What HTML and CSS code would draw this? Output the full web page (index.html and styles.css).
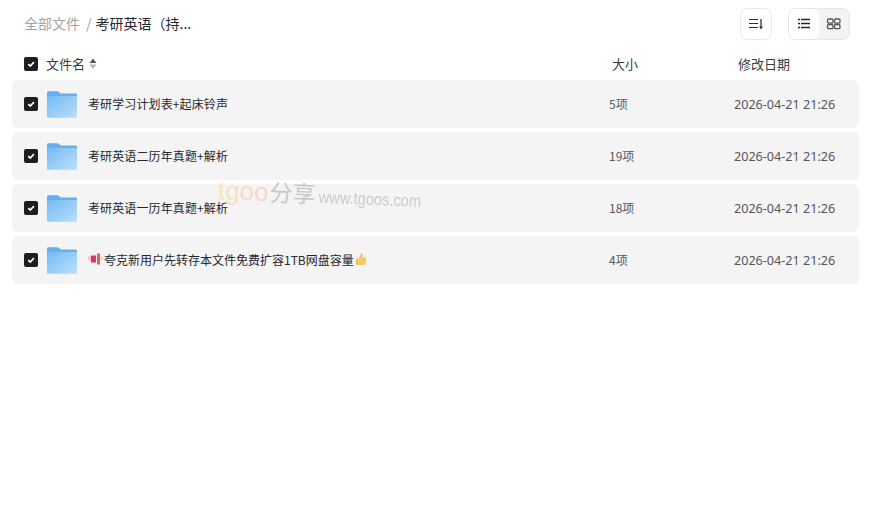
FILE: index.html
```html
<!DOCTYPE html>
<html lang="zh-CN">
<head>
<meta charset="utf-8">
<title>考研英语</title>
<link rel="stylesheet" href="styles.css">
</head>
<body>
<svg class="defs" width="0" height="0" aria-hidden="true">
  <defs>
    <linearGradient id="fg" x1="0" y1="0" x2="1" y2="1">
      <stop offset="0" stop-color="#74baf3"/>
      <stop offset="1" stop-color="#bbdffb"/>
    </linearGradient>
    <symbol id="folder" viewBox="0 0 30 28">
      <path d="M0 2.800C0 1.900.7 1.200 1.600 1.200h8.600c.6 0 1.100.3 1.500.6L13.500 3.500H28.500c.9 0 1.500.7 1.500 1.500V8H0z" fill="#63aeef"/>
      <path d="M0 6h28.500c.8 0 1.500.7 1.500 1.500v18.900c0 .7-.6 1.300-1.300 1.300H1.300C.6 27.700 0 27.100 0 26.400z" fill="url(#fg)"/>
      <rect x="22" y="8.500" width="3.500" height="1.500" fill="#93c8f3"/>
    </symbol>
    <symbol id="check" viewBox="0 0 14 14">
      <rect width="14" height="14" rx="2" fill="#1d1e24"/>
      <path d="M4.300 7.100l2 2 3.600-4" fill="none" stroke="#fff" stroke-width="1.700"/>
    </symbol>
  </defs>
</svg>
<main class="page">
  <header class="topbar">
    <nav class="crumbs">
      <span class="crumb-root">全部文件</span>
      <span class="crumb-sep">/</span>
      <span class="crumb-cur">考研英语（持...</span>
    </nav>
    <div class="tools">
      <button class="tool-btn" type="button" aria-label="排序">
        <svg width="16" height="16" viewBox="0 0 16 16"><path d="M1 3.500h9M1 7.500h9M1 11.500h9" stroke="#33343a" stroke-width="1.200" fill="none"/><path d="M13 3v9" stroke="#33343a" stroke-width="1.300"/><path d="M11 10.500h4L13 13.500z" fill="#33343a"/></svg>
      </button>
      <div class="view-switch">
        <span class="view-opt view-on">
          <svg width="16" height="16" viewBox="0 0 16 16"><path d="M5 3.500h9M5 7.500h9M5 11.500h9" stroke="#26272d" stroke-width="1.300" fill="none"/><path d="M2 3.500h2M2 7.500h2M2 11.500h2" stroke="#26272d" stroke-width="1.300" fill="none"/></svg>
        </span>
        <span class="view-opt">
          <svg width="16" height="16" viewBox="0 0 16 16"><g fill="none" stroke="#55565c" stroke-width="1.300"><rect x="1.500" y="3" width="5.500" height="4.200" rx="1.300"/><rect x="8.500" y="3" width="5.500" height="4.200" rx="1.300"/><rect x="1.500" y="8.500" width="5.500" height="4.200" rx="1.300"/><rect x="8.500" y="8.500" width="5.500" height="4.200" rx="1.300"/></g></svg>
        </span>
      </div>
    </div>
  </header>

  <div class="head-row">
    <svg class="check" width="14" height="14"><use href="#check"/></svg>
    <span class="head-name">文件名</span>
    <svg class="sort" width="8" height="12" viewBox="0 0 8 12"><path d="M4 .5L7.500 5H.5z" fill="#55565c"/><path d="M4 11L7.500 6.500H.5z" fill="#b4b4b8"/></svg>
    <span class="head-size">大小</span>
    <span class="head-date">修改日期</span>
  </div>

  <ul class="list">
    <li class="row">
      <svg class="check" width="14" height="14"><use href="#check"/></svg>
      <svg class="folder" width="30" height="28"><use href="#folder"/></svg>
      <span class="name name-spaced">考研学习计划表+起床铃声</span>
      <span class="size">5项</span>
      <span class="date">2026-04-21 21:26</span>
    </li>
    <li class="row">
      <svg class="check" width="14" height="14"><use href="#check"/></svg>
      <svg class="folder" width="30" height="28"><use href="#folder"/></svg>
      <span class="name name-spaced">考研英语二历年真题+解析</span>
      <span class="size">19项</span>
      <span class="date">2026-04-21 21:26</span>
    </li>
    <li class="row">
      <svg class="check" width="14" height="14"><use href="#check"/></svg>
      <svg class="folder" width="30" height="28"><use href="#folder"/></svg>
      <span class="name name-spaced">考研英语一历年真题+解析</span>
      <span class="size">18项</span>
      <span class="date">2026-04-21 21:26</span>
    </li>
    <li class="row">
      <svg class="check" width="14" height="14"><use href="#check"/></svg>
      <svg class="folder" width="30" height="28"><use href="#folder"/></svg>
      <span class="name">
        <svg class="emoji-horn" width="16" height="12" viewBox="0 0 16 12"><rect x="0" y="3.500" width="3" height="4" fill="#f3c4cf"/><path d="M3 2.500h5v7H3z" fill="#d6366b"/><path d="M9 .5h3v11H9z" fill="#f4565a"/><path d="M12 4h3v3h-3z" fill="#e9d9d4"/></svg>夸克新用户先转存本文件免费扩容1TB网盘容量<svg class="emoji-thumb" width="12" height="14" viewBox="0 0 12 14"><path d="M1 6.500h2.500V13H2a1 1 0 0 1-1-1z" fill="#f2b84a"/><path d="M4 6.500L6 1.500c1.200-.6 2 .4 1.800 1.500L7.300 5.500H10c1 0 1.500.8 1.300 1.700l-1 4.800c-.2.700-.7 1-1.300 1H4z" fill="#f7c65e"/></svg>
      </span>
      <span class="size">4项</span>
      <span class="date">2026-04-21 21:26</span>
    </li>
  </ul>

  <div class="watermark"><span class="wm-t">tgoo</span><span class="wm-cn">分享</span><span class="wm-url">www.tgoos.com</span></div>
</main>
</body>
</html>
```
FILE: styles.css
```css
* { box-sizing: border-box; }
html, body { margin: 0; padding: 0; background: #fff; }
body {
  font-family: "Noto Sans CJK SC", "Noto Sans", sans-serif;
  color: #26272d;
  width: 874px;
  height: 514px;
  overflow: hidden;
}
.defs { position: absolute; }
.page { position: relative; padding: 8px 15px 0 12px; }
.topbar {
  display: flex;
  justify-content: space-between;
  align-items: center;
  height: 32px;
  padding: 0 9px 0 12px;
}
.crumbs { display: flex; align-items: center; font-size: 14px; line-height: 20px; padding-bottom: 2px; }
.crumb-root { color: #a3a2a6; }
.crumb-sep { color: #a3a2a6; margin: 0 4px 0 6px; }
.crumb-cur { color: #26272d; }
.tools { display: flex; gap: 16px; }
.tool-btn {
  width: 32px;
  height: 32px;
  padding: 0;
  background: #fff;
  border: 1px solid #e8e8ea;
  border-radius: 8px;
  display: flex;
  align-items: center;
  justify-content: center;
}
.view-switch {
  display: flex;
  width: 62px;
  height: 32px;
  background: #f3f3f4;
  border: 1px solid #e6e6e8;
  border-radius: 8px;
}
.view-opt { flex: 1; display: flex; align-items: center; justify-content: center; border-radius: 7px; }
.view-on { background: #fff; }
.head-row {
  display: flex;
  align-items: center;
  height: 32px;
  margin-top: 8px;
  padding-left: 12px;
  font-size: 13px;
  color: #3b3c42;
}
.check { flex: none; display: block; }
.head-name { margin-left: 8px; padding-bottom: 2px; }
.sort { margin-left: 4px; }
.head-size { margin-left: 515px; width: 126px; padding-bottom: 2px; }
.head-date { padding-bottom: 2px; }
.list { list-style: none; margin: 0; padding: 0; display: flex; flex-direction: column; gap: 4px; }
.row {
  display: flex;
  align-items: center;
  height: 48px;
  padding-left: 12px;
  background: #f4f4f4;
  border-radius: 6px;
  font-size: 12px;
}
.folder { flex: none; margin-left: 9px; }
.name { margin-left: 11px; width: 521px; flex: none; color: #26272d; display: flex; align-items: center; padding-bottom: 2px; }
.name-spaced { letter-spacing: .12px; }
.emoji-horn { margin-right: 0; }
.emoji-thumb { margin-left: 1px; }
.size { width: 125px; flex: none; color: #55565c; padding-bottom: 2px; }
.date { color: #55565c; font-family: "Noto Sans", sans-serif; font-size: 12.600px; }
.watermark {
  position: absolute;
  left: 218px;
  top: 172px;
  display: flex;
  align-items: baseline;
  pointer-events: none;
  white-space: nowrap;
  transform: rotate(2.200deg);
  transform-origin: left center;
}
.wm-t { font-size: 26px; font-family: "Liberation Sans", sans-serif; background: linear-gradient(90deg, #fbe3b8, #fbcfcb); -webkit-background-clip: text; background-clip: text; color: transparent; }
.wm-cn { font-size: 23px; color: #c8c8c9; margin-left: 1px; }
.wm-url { font-size: 17px; color: #cbcbcd; margin-left: 3px; font-family: "Liberation Sans", sans-serif; transform: scaleX(.86); transform-origin: left center; }
```
